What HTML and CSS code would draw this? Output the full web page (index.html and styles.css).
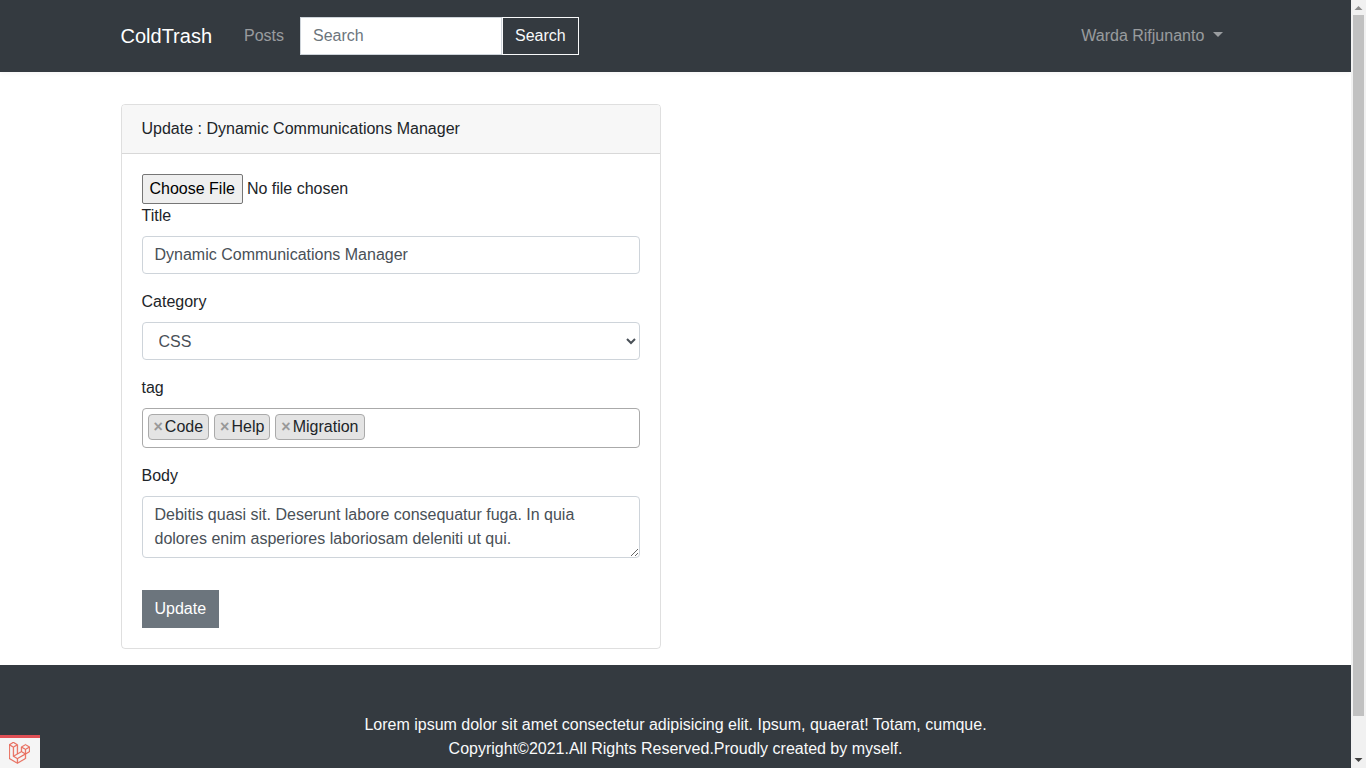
FILE: index.html
```html
<!DOCTYPE html>
<html lang="en">
<head>
<meta charset="utf-8">
<title>ColdTrash</title>
<link rel="stylesheet" href="styles.css">
</head>
<body>
<div class="viewport">
  <div class="page">
    <nav class="navbar">
      <div class="container nav-inner">
        <a class="brand">ColdTrash</a>
        <a class="nav-link">Posts</a>
        <form class="search">
          <input class="search-input" type="text" placeholder="Search">
          <button class="search-btn" type="button">Search</button>
        </form>
        <a class="nav-link user">Warda Rifjunanto<span class="caret"></span></a>
      </div>
    </nav>
    <main class="container main">
      <section class="card">
        <header class="card-header">Update : Dynamic Communications Manager</header>
        <form class="card-body">
          <div class="file"><button class="file-btn" type="button">Choose File</button><span>No file chosen</span></div>
          <div class="group">
            <label class="label">Title</label>
            <input class="control" type="text" value="Dynamic Communications Manager">
          </div>
          <div class="group">
            <label class="label">Category</label>
            <select class="control select"><option>CSS</option></select>
          </div>
          <div class="group">
            <label class="label">tag</label>
            <div class="tags">
              <span class="tag"><b class="remove">×</b>Code</span>
              <span class="tag"><b class="remove">×</b>Help</span>
              <span class="tag"><b class="remove">×</b>Migration</span>
            </div>
          </div>
          <div class="group body-group">
            <label class="label">Body</label>
            <textarea class="control textarea">Debitis quasi sit. Deserunt labore consequatur fuga. In quia dolores enim asperiores laboriosam deleniti ut qui.</textarea>
          </div>
          <button class="submit" type="button">Update</button>
        </form>
      </section>
    </main>
    <footer class="footer">
      <div>Lorem ipsum dolor sit amet consectetur adipisicing elit. Ipsum, quaerat! Totam, cumque.</div>
      <div>Copyright©2021.All Rights Reserved.Proudly created by myself.</div>
    </footer>
  </div>
  <div class="scrollbar">
    <svg class="arrow" viewBox="0 0 15 15"><path d="M3.500 10h8L7.500 6z" fill="#8c8c8c"/></svg>
    <div class="thumb"></div>
    <svg class="arrow" viewBox="0 0 15 15"><path d="M3.500 5h8L7.500 9z" fill="#404040"/></svg>
  </div>
</div>
<a class="debug">
  <svg class="debug-logo" viewBox="0 0 50 52"><path fill="#e8604f" stroke="#e8604f" stroke-width="1" d="M49.626 11.564a.809.809 0 0 1 .028.209v10.972a.8.8 0 0 1-.402.694l-9.209 5.302V39.25c0 .286-.152.55-.4.694L20.42 51.01c-.044.025-.092.041-.14.058-.018.006-.035.017-.054.022a.805.805 0 0 1-.41 0c-.022-.006-.042-.018-.063-.026-.044-.016-.09-.03-.132-.054L.402 39.944A.801.801 0 0 1 0 39.25V6.334c0-.072.01-.142.028-.21.006-.023.02-.044.028-.067.015-.042.029-.085.051-.124.015-.026.037-.047.055-.071.023-.032.044-.065.071-.093.023-.023.053-.04.079-.06.029-.024.055-.05.088-.069h.001l9.61-5.533a.802.802 0 0 1 .8 0l9.61 5.533h.002c.032.02.059.045.088.068.026.02.055.038.078.06.028.029.048.062.072.094.017.024.04.045.054.071.023.04.036.082.052.124.008.023.022.044.028.068a.809.809 0 0 1 .028.209v20.559l8.008-4.611v-10.51c0-.07.01-.141.028-.208.007-.024.02-.045.028-.068.016-.042.03-.085.052-.124.015-.026.037-.047.054-.071.024-.032.044-.065.072-.093.023-.023.052-.04.078-.06.03-.024.056-.05.088-.069h.001l9.611-5.533a.801.801 0 0 1 .8 0l9.61 5.533c.034.02.06.045.09.068.025.02.054.038.077.06.028.029.048.062.072.094.018.024.04.045.054.071.023.039.036.082.052.124.009.023.022.044.028.068zm-1.574 10.718v-9.124l-3.363 1.936-4.646 2.675v9.124l8.01-4.611zm-9.61 16.505v-9.13l-4.57 2.61-13.05 7.448v9.216l17.62-10.144zM1.602 7.719v31.068L19.22 48.93v-9.214l-9.204-5.209-.003-.002-.004-.002c-.031-.018-.057-.044-.086-.066-.025-.02-.054-.036-.076-.058l-.002-.003c-.026-.025-.044-.056-.066-.084-.02-.027-.044-.05-.06-.078l-.001-.003c-.018-.03-.029-.066-.042-.1-.013-.03-.03-.058-.038-.09v-.001c-.01-.038-.012-.078-.016-.117-.004-.03-.012-.06-.012-.09v-21.483L4.965 9.654 1.602 7.72zm8.81-5.994L2.405 6.334l8.005 4.609 8.006-4.61-8.006-4.608zm4.164 28.764l4.645-2.674V7.719l-3.363 1.936-4.646 2.675v20.096l3.364-1.937zM39.243 7.164l-8.006 4.609 8.006 4.609 8.005-4.61-8.005-4.608zm-.801 10.605l-4.646-2.675-3.363-1.936v9.124l4.645 2.674 3.364 1.937v-9.124zM20.02 38.33l11.743-6.704 5.87-3.35-8-4.606-9.211 5.303-8.395 4.833 7.993 4.524z"/></svg>
</a>
</body>
</html>
```
FILE: styles.css
```css
*, *::before, *::after { box-sizing: border-box; }
body {
  margin: 0;
  font: 16px/24px "Liberation Sans", Arial, sans-serif;
  color: #212529;
  background: #fff;
  overflow: hidden;
}
input, button, select, textarea { font: inherit; margin: 0; }
.viewport { display: grid; grid-template-columns: minmax(0, 1fr) 15px; height: 768px; }
.page { height: 768px; overflow: hidden; display: flex; flex-direction: column; }
.container { width: 1140px; margin: 0 auto; padding: 0 15px; }

.navbar { height: 72px; flex: none; padding-top: 17px; background: #343a40; box-shadow: 0 2px 4px rgba(0, 0, 0, .04); }
.nav-inner { display: flex; align-items: center; height: 38px; }
.brand { font-size: 20px; line-height: 30px; color: #fff; margin-right: 24px; }
.nav-link { padding: 0 8px; color: rgba(255, 255, 255, .5); }
.search { display: flex; margin-left: 8px; }
.search-input { width: 202px; height: 38px; padding: 6px 12px; border: 1px solid #ced4da; border-radius: 0; background: #fff; color: #495057; }
.search-input::placeholder { color: #6c757d; opacity: 1; }
.search-btn { height: 38px; padding: 6px 12px; border: 1px solid #f8f9fa; background: transparent; color: #f8f9fa; }
.user { margin-left: auto; }
.caret { display: inline-block; margin-left: 8.2px; vertical-align: 4px; border-top: 5px solid; border-left: 5px solid transparent; border-right: 5px solid transparent; }

.main { flex: none; padding-top: 32px; height: 593px; }
.card { width: 540px; border: 1px solid rgba(0, 0, 0, .125); border-radius: 4px; height: 545px; }
.card-header { height: 49px; padding: 12px 20px; background: #f7f7f7; border-bottom: 1px solid rgba(0, 0, 0, .125); border-radius: 3px 3px 0 0; }
.card-body { padding: 20px; }
.file { display: flex; align-items: center; gap: 4px; height: 30px; }
.file-btn { height: 30px; padding: 1px 7px; border: 1px solid #767676; border-radius: 2px; background: #efefef; color: #000; }
.group { margin-bottom: 16px; }
.label { display: block; margin-bottom: 8px; }
.control { display: block; width: 100%; height: 38px; padding: 6px 12px; border: 1px solid #ced4da; border-radius: 4px; background: #fff; color: #495057; }
.tags { display: flex; gap: 5px; height: 40px; padding: 5px; border: 1px solid #aaa; border-radius: 4px; }
.tag { display: flex; height: 26px; padding: 0 5px; border: 1px solid #aaa; border-radius: 4px; background: #e4e4e4; }
.remove { color: #999; margin-right: 2px; }
.textarea { height: 62px; resize: vertical; overflow: hidden; }
.body-group { margin-bottom: 32px; }
.submit { display: block; height: 38px; padding: 6px 12px; border: 1px solid #6c757d; background: #6c757d; color: #fff; }

.footer { flex: 1; padding-top: 48px; background: #343a40; color: #f8f9fa; text-align: center; }

.scrollbar { display: flex; flex-direction: column; justify-content: space-between; background: #f1f1f1; height: 768px; }
.arrow { display: block; width: 15px; height: 15px; flex: none; }
.thumb { width: 11px; height: 701px; margin: 0 2px auto; background: #c1c1c1; }

.debug { position: fixed; left: 0; bottom: 0; width: 40px; height: 33px; border-top: 3px solid #e04f55; background: #f5f5f5; }
.debug-logo { display: block; width: 21px; height: 22px; margin: 4px 0 0 9px; }
```
